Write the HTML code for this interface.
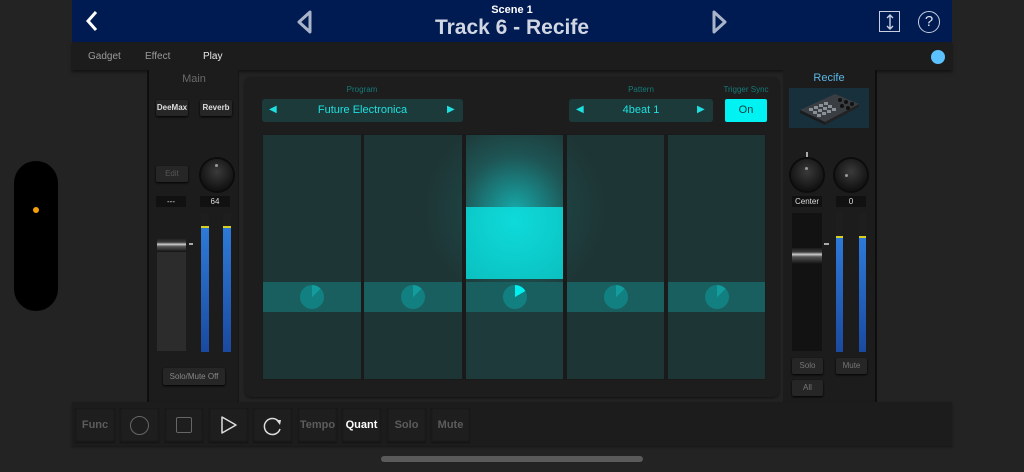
<!DOCTYPE html>
<html><head><meta charset="utf-8"><style>
*{margin:0;padding:0;box-sizing:border-box}
body{width:1024px;height:472px;background:#232323;font-family:"Liberation Sans",sans-serif;position:relative;overflow:hidden}
.a{position:absolute}
.hdr{left:72px;top:0;width:880px;height:42px;background:#001a52}
.tabs{left:72px;top:42px;width:880px;height:28px;background:#1c1c1c;box-shadow:0 2px 3px rgba(0,0,0,.5)}
.tab{top:51px;font-size:10px;color:#9a9a9a}
.btn{background:#262626;border-radius:2px;box-shadow:0 1px 2px #000;color:#ddd;font-size:8px;font-weight:bold;text-align:center}
.box{background:#111;color:#ddd;font-size:8px;text-align:center;line-height:11px}
.knob{border-radius:50%;background:radial-gradient(circle at 50% 40%,#3a3a3a,#161616 65%,#050505);box-shadow:0 0 0 2px #0c0c0c}
.knob i{position:absolute;width:3px;height:3px;border-radius:50%;background:#999}
.pad{top:135px;height:244px;background:#1e3535;overflow:hidden}
.band{position:absolute;left:0;right:0;top:147px;height:30px;background:#1a5f5f}
.circ{position:absolute;left:50%;top:3px;margin-left:-12px;width:24px;height:24px;border-radius:50%;background:conic-gradient(#129c9c 0 45deg,#128080 45deg)}
.tb{top:408px;height:34px;background:#1e1e1e;box-shadow:0 0 2px #111 inset,0 1px 1px #141414;color:#5c5c5c;font-size:11px;font-weight:bold;text-align:center;line-height:34px}
</style></head><body>
<div class="a" style="left:14px;top:161px;width:44px;height:150px;background:#000;border-radius:22px"></div>
<div class="a" style="left:33px;top:207px;width:6px;height:6px;border-radius:50%;background:#f5a00a"></div>

<div class="a hdr"></div>
<svg class="a" style="left:84px;top:10px" width="16" height="22"><path d="M12 2 L4 11 L12 20" stroke="#fff" stroke-width="3" fill="none"/></svg>
<svg class="a" style="left:296px;top:10px" width="18" height="24"><path d="M14 2 L3 12 L14 22 Z" stroke="#aab4c8" stroke-width="3" fill="none" stroke-linejoin="round"/></svg>
<svg class="a" style="left:710px;top:10px" width="18" height="24"><path d="M4 2 L15 12 L4 22 Z" stroke="#aab4c8" stroke-width="3" fill="none" stroke-linejoin="round"/></svg>
<div class="a" style="left:412px;top:4px;width:200px;text-align:center;color:#fff;font-size:11px;font-weight:bold">Scene 1</div>
<div class="a" style="left:362px;top:16px;width:300px;text-align:center;color:#d0d6e2;font-size:21px;font-weight:bold">Track 6 - Recife</div>
<div class="a" style="left:879px;top:11px;width:21px;height:21px;border:1.5px solid #c8d0e0"></div>
<svg class="a" style="left:883px;top:13px" width="14" height="18"><path d="M7 2 V16 M4 5 L7 2 L10 5 M4 13 L7 16 L10 13" stroke="#c8d0e0" stroke-width="1.4" fill="none"/></svg>
<div class="a" style="left:918px;top:11px;width:22px;height:22px;border:1.5px solid #c8d0e0;border-radius:50%;color:#e0e4ee;font-size:15px;text-align:center;line-height:19px">?</div>

<div class="a tabs"></div>
<div class="a tab" style="left:88px">Gadget</div>
<div class="a tab" style="left:145px">Effect</div>
<div class="a tab" style="left:203px;color:#e8e8e8">Play</div>
<div class="a" style="left:931px;top:50px;width:14px;height:14px;border-radius:50%;background:#5cc2ff"></div>

<div class="a" style="left:147px;top:70px;width:92px;height:332px;background:#1c1c1c;border-left:2px solid #0e0e0e;border-right:1px solid #161616"></div>
<div class="a" style="left:150px;top:73px;width:88px;text-align:center;color:#6a6a6a;font-size:11px">Main</div>
<div class="a btn" style="left:156px;top:100px;width:32px;height:16px;line-height:16px">DeeMax</div>
<div class="a btn" style="left:200px;top:100px;width:32px;height:16px;line-height:16px">Reverb</div>
<div class="a btn" style="left:156px;top:166px;width:32px;height:16px;line-height:16px;color:#555;font-weight:normal">Edit</div>
<div class="a knob" style="left:201px;top:159px;width:32px;height:32px"><i style="left:14px;top:5px"></i></div>
<div class="a box" style="left:156px;top:196px;width:30px;height:11px">---</div>
<div class="a box" style="left:200px;top:196px;width:30px;height:11px">64</div>
<div class="a" style="left:157px;top:213px;width:29px;height:138px;background:#2c2c2c"></div>
<div class="a" style="left:157px;top:213px;width:29px;height:25px;background:#1c1c1c"></div>
<div class="a" style="left:157px;top:238px;width:29px;height:14px;background:linear-gradient(#1a1a1a,#3a3a3a 30%,#ccc 45%,#555 60%,#111)"></div>
<div class="a" style="left:189px;top:243px;width:4px;height:2px;background:#aaa"></div>
<div class="a" style="left:201px;top:213px;width:8px;height:139px;background:#1e1e1e"></div>
<div class="a" style="left:201px;top:227px;width:8px;height:125px;background:linear-gradient(#2e7ad8,#1a4aa0)"></div>
<div class="a" style="left:201px;top:226px;width:8px;height:2px;background:#d8d020"></div>
<div class="a" style="left:223px;top:213px;width:8px;height:139px;background:#1e1e1e"></div>
<div class="a" style="left:223px;top:227px;width:8px;height:125px;background:linear-gradient(#2e7ad8,#1a4aa0)"></div>
<div class="a" style="left:223px;top:226px;width:8px;height:2px;background:#d8d020"></div>
<div class="a btn" style="left:163px;top:368px;width:62px;height:17px;line-height:17px;color:#888;font-weight:normal">Solo/Mute Off</div>

<div class="a" style="left:245px;top:77px;width:534px;height:320px;background:#1d1d1d;border-radius:6px;box-shadow:0 1px 2px #111"></div>
<div class="a" style="left:312px;top:85px;width:100px;text-align:center;color:#157a7a;font-size:8px">Program</div>
<div class="a" style="left:262px;top:99px;width:201px;height:23px;background:#1c3a3a;border-radius:3px;color:#1fe0e0;font-size:11px;line-height:23px;text-align:center">Future Electronica</div>
<div class="a" style="left:269px;top:104px;color:#1fe0e0;font-size:10px">◀</div>
<div class="a" style="left:447px;top:104px;color:#1fe0e0;font-size:10px">▶</div>
<div class="a" style="left:591px;top:85px;width:100px;text-align:center;color:#157a7a;font-size:8px">Pattern</div>
<div class="a" style="left:569px;top:99px;width:144px;height:23px;background:#1c3a3a;border-radius:3px;color:#1fe0e0;font-size:11px;line-height:23px;text-align:center">4beat 1</div>
<div class="a" style="left:576px;top:104px;color:#1fe0e0;font-size:10px">◀</div>
<div class="a" style="left:697px;top:104px;color:#1fe0e0;font-size:10px">▶</div>
<div class="a" style="left:716px;top:85px;width:60px;text-align:center;color:#157a7a;font-size:8px">Trigger Sync</div>
<div class="a" style="left:725px;top:99px;width:42px;height:23px;background:#00f2f2;border-radius:2px;color:#0b4040;font-size:11px;line-height:23px;text-align:center">On</div>

<div class="a" style="left:262px;top:134px;width:504px;height:246px;background:#1a1a1a"></div>
<div class="a pad" style="left:263px;width:98px"><div class="band"><div class="circ"></div></div></div>
<div class="a pad" style="left:364px;width:98px;background:radial-gradient(circle 90px at 150px 75px,#1e5050,#1e3535)"><div class="band"><div class="circ"></div></div></div>
<div class="a pad" style="left:466px;width:97px;background:radial-gradient(circle 90px at 49px 75px,#17a8a8,#1e5555 60%,#1e3a3a)">
<div style="position:absolute;left:0;top:72px;width:97px;height:72px;background:radial-gradient(circle at 50% 20%,#0fdada,#0bc0c0)"></div>
<div class="band"><div class="circ" style="background:conic-gradient(#00f0f0 0 60deg,#128080 60deg)"></div></div></div>
<div class="a pad" style="left:567px;width:97px;background:radial-gradient(circle 90px at -52px 75px,#1e5050,#1e3535)"><div class="band"><div class="circ"></div></div></div>
<div class="a pad" style="left:668px;width:97px"><div class="band"><div class="circ"></div></div></div>

<div class="a" style="left:783px;top:70px;width:94px;height:332px;background:#1c1c1c;border-right:2px solid #0e0e0e"></div>
<div class="a" style="left:783px;top:72px;width:92px;text-align:center;color:#5ab6e6;font-size:11px">Recife</div>
<div class="a" style="left:789px;top:88px;width:80px;height:40px;background:#17303c"></div>
<svg class="a" style="left:795px;top:90px" width="70" height="36"><path d="M5 20 L40 4 L64 14 L30 32 Z" fill="#3a3e42"/><path d="M5 20 L30 32 L30 35 L5 23 Z" fill="#1a1c1e"/><path d="M30 32 L64 14 L64 17 L30 35Z" fill="#222"/><g fill="#8a9098"><rect x="14" y="18" width="4" height="3"/><rect x="19" y="16" width="4" height="3"/><rect x="24" y="14" width="4" height="3"/><rect x="29" y="12" width="4" height="3"/><rect x="18" y="21" width="4" height="3"/><rect x="23" y="19" width="4" height="3"/><rect x="28" y="17" width="4" height="3"/><rect x="33" y="15" width="4" height="3"/><rect x="22" y="24" width="4" height="3"/><rect x="27" y="22" width="4" height="3"/><rect x="32" y="20" width="4" height="3"/><rect x="37" y="18" width="4" height="3"/></g><g fill="#111"><circle cx="45" cy="10" r="2"/><circle cx="51" cy="12" r="2"/><circle cx="47" cy="16" r="2"/><circle cx="53" cy="18" r="2"/><circle cx="57" cy="14" r="2"/></g></svg>
<div class="a" style="left:806px;top:152px;width:2px;height:5px;background:#aaa"></div>
<div class="a knob" style="left:791px;top:159px;width:32px;height:32px"><i style="left:14px;top:8px"></i></div>
<div class="a knob" style="left:835px;top:159px;width:32px;height:32px"><i style="left:10px;top:15px"></i></div>
<div class="a box" style="left:792px;top:196px;width:30px;height:11px">Center</div>
<div class="a box" style="left:836px;top:196px;width:30px;height:11px">0</div>
<div class="a" style="left:792px;top:213px;width:30px;height:138px;background:#121212"></div>
<div class="a" style="left:792px;top:248px;width:30px;height:16px;background:linear-gradient(#1a1a1a,#3a3a3a 25%,#ccc 40%,#555 55%,#111)"></div>
<div class="a" style="left:824px;top:243px;width:5px;height:2px;background:#aaa"></div>
<div class="a" style="left:836px;top:213px;width:7px;height:139px;background:#1e1e1e"></div>
<div class="a" style="left:836px;top:237px;width:7px;height:115px;background:linear-gradient(#2e7ad8,#1a4aa0)"></div>
<div class="a" style="left:836px;top:236px;width:7px;height:2px;background:#d8d020"></div>
<div class="a" style="left:859px;top:213px;width:7px;height:139px;background:#1e1e1e"></div>
<div class="a" style="left:859px;top:237px;width:7px;height:115px;background:linear-gradient(#2e7ad8,#1a4aa0)"></div>
<div class="a" style="left:859px;top:236px;width:7px;height:2px;background:#d8d020"></div>
<div class="a btn" style="left:792px;top:358px;width:31px;height:16px;line-height:16px;color:#777;font-weight:normal">Solo</div>
<div class="a btn" style="left:836px;top:358px;width:31px;height:16px;line-height:16px;color:#777;font-weight:normal">Mute</div>
<div class="a btn" style="left:792px;top:380px;width:31px;height:16px;line-height:16px;color:#777;font-weight:normal">All</div>

<div class="a" style="left:72px;top:402px;width:880px;height:44px;background:#1c1c1c;box-shadow:0 1px 2px #151515"></div>
<div class="a tb" style="left:75px;width:40px">Func</div>
<div class="a tb" style="left:120px;width:39px"></div>
<div class="a" style="left:130px;top:416px;width:19px;height:19px;border:1.5px solid #666;border-radius:50%"></div>
<div class="a tb" style="left:165px;width:38px"></div>
<div class="a" style="left:176px;top:417px;width:16px;height:16px;border:1.5px solid #666;border-radius:2px"></div>
<div class="a tb" style="left:209px;width:39px"></div>
<svg class="a" style="left:219px;top:415px" width="20" height="20"><path d="M3 2 L17 10 L3 18 Z" stroke="#ddd" stroke-width="1.5" fill="none" stroke-linejoin="round"/></svg>
<div class="a tb" style="left:253px;width:39px"></div>
<svg class="a" style="left:262px;top:415px" width="22" height="22"><path d="M17 7 A8 8 0 1 0 18 14" stroke="#ddd" stroke-width="1.5" fill="none"/><path d="M14 5 L19 5 L18 10 Z" fill="#ddd"/></svg>
<div class="a tb" style="left:298px;width:39px">Tempo</div>
<div class="a tb" style="left:342px;width:39px;color:#fff">Quant</div>
<div class="a tb" style="left:387px;width:39px">Solo</div>
<div class="a tb" style="left:431px;width:39px">Mute</div>
<div class="a" style="left:381px;top:456px;width:262px;height:6px;border-radius:3px;background:#5a5a5a"></div>
</body></html>
